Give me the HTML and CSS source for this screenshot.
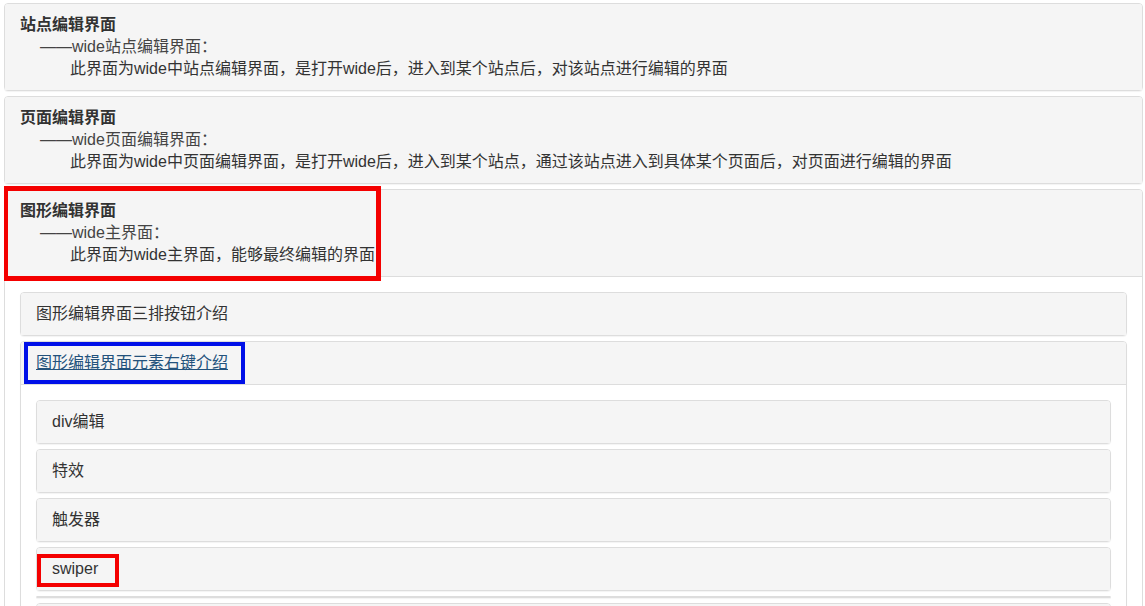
FILE: index.html
```html
<!DOCTYPE html>
<html>
<head>
    <meta charset="utf-8">
    <title>wide 界面说明</title>
    <link rel="stylesheet" href="styles.css">
</head>
<body>
    <div class="panel-group">
        <div class="panel">
            <div class="panel-heading">
                <div class="panel-title">站点编辑界面</div>
                <div class="sub">——wide站点编辑界面：</div>
                <div class="desc">此界面为wide中站点编辑界面，是打开wide后，进入到某个站点后，对该站点进行编辑的界面</div>
            </div>
        </div>

        <div class="panel">
            <div class="panel-heading">
                <div class="panel-title">页面编辑界面</div>
                <div class="sub">——wide页面编辑界面：</div>
                <div class="desc">此界面为wide中页面编辑界面，是打开wide后，进入到某个站点，通过该站点进入到具体某个页面后，对页面进行编辑的界面</div>
            </div>
        </div>

        <div class="panel">
            <div class="panel-heading">
                <div class="panel-title">图形编辑界面</div>
                <div class="sub">——wide主界面：</div>
                <div class="desc">此界面为wide主界面，能够最终编辑的界面</div>
                <span class="mark mark-red mark-main"></span>
            </div>
            <div class="panel-body">
                <div class="panel-group">
                    <div class="panel">
                        <div class="panel-heading item">图形编辑界面三排按钮介绍</div>
                    </div>
                    <div class="panel">
                        <div class="panel-heading item">
                            <a href="#" class="active-link">图形编辑界面元素右键介绍</a>
                            <span class="mark mark-blue mark-link"></span>
                        </div>
                        <div class="panel-body">
                            <div class="panel-group">
                                <div class="panel"><div class="panel-heading item">div编辑</div></div>
                                <div class="panel"><div class="panel-heading item">特效</div></div>
                                <div class="panel"><div class="panel-heading item">触发器</div></div>
                                <div class="panel">
                                    <div class="panel-heading item">
                                        swiper
                                        <span class="mark mark-red mark-swiper"></span>
                                    </div>
                                </div>
                                <div class="panel"></div>
                                <div class="panel"><div class="panel-heading item">&nbsp;</div></div>
                            </div>
                        </div>
                    </div>
                </div>
            </div>
        </div>
    </div>
</body>
</html>
```

FILE: styles.css
```css
body {
    margin: 3px 2px 0 4px;
    font-family: "Liberation Sans", Arial, "Noto Sans CJK SC", sans-serif;
    font-size: 16px;
    line-height: 22px;
    color: #333;
    background: #fff;
    overflow: hidden;
}

.panel {
    background: #fff;
    border: 1px solid #ddd;
    border-radius: 4px;
    box-shadow: 0 1px 1px rgba(0, 0, 0, 0.05);
}

.panel + .panel {
    margin-top: 5px;
}

.panel-heading {
    position: relative;
    padding: 10px 15px;
    background: #f5f5f5;
    border-radius: 3px 3px 0 0;
}

.panel-title {
    font-weight: bold;
    color: #333;
}

.sub {
    padding-left: 20px;
    color: #444;
}

.desc {
    padding-left: 50px;
}

.panel-body {
    padding: 15px;
    border-top: 1px solid #ddd;
}

.active-link {
    color: #23527c;
    text-decoration: underline;
}

.mark {
    position: absolute;
    box-sizing: border-box;
}

.mark-red {
    border: 5px solid #f40000;
}

.mark-blue {
    border: 4px solid #0010e8;
}

.mark-main {
    left: -2px;
    top: -4px;
    width: 378px;
    height: 95px;
}

.mark-link {
    left: 3px;
    top: 0;
    width: 221px;
    height: 42px;
}

.mark-swiper {
    left: 0;
    top: 6px;
    width: 82px;
    height: 33px;
    border-width: 4px;
}
```
